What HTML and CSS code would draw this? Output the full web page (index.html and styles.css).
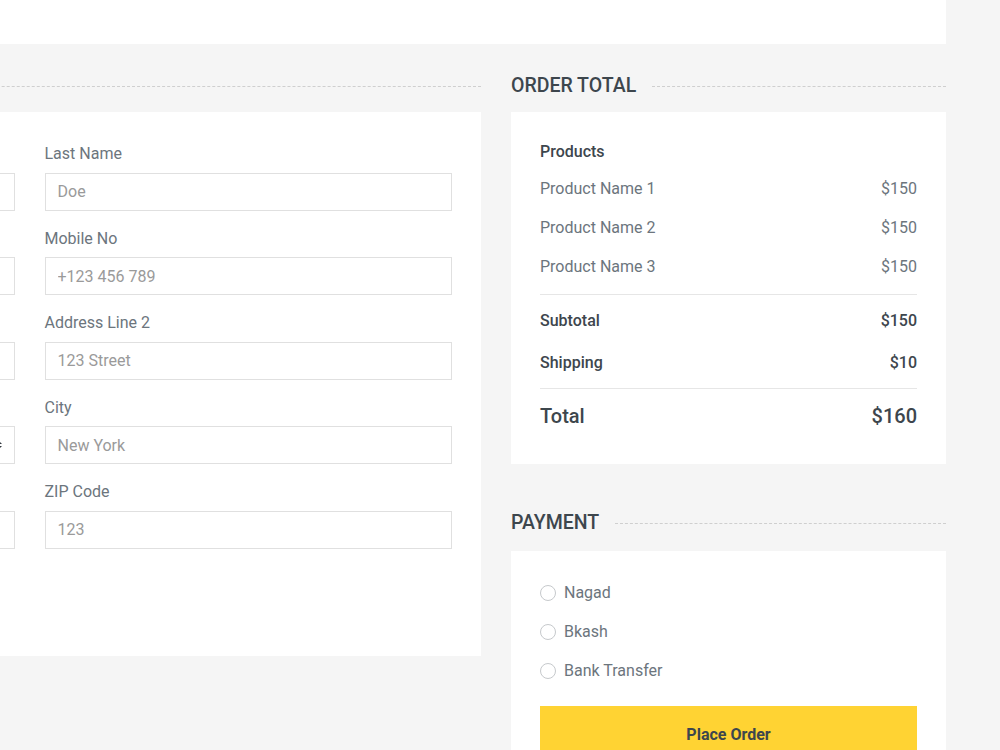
FILE: index.html
```
<!DOCTYPE html>
<html>

<head>
    <title>Checkout</title>
    <link rel="stylesheet" href="styles.css">
</head>

<body>
    <div class="page">
        <nav class="crumbs"></nav>
        <main class="checkout">
            <section class="billing">
                <h5 class="section-title"><span>Billing Address</span></h5>
                <div class="card">
                    <div class="fields">
                        <div class="field">
                            <label>First Name</label>
                            <input type="text" placeholder="John" />
                        </div>
                        <div class="field">
                            <label>Last Name</label>
                            <input type="text" placeholder="Doe" />
                        </div>
                        <div class="field">
                            <label>E-mail</label>
                            <input type="text" placeholder="example@email.com" />
                        </div>
                        <div class="field">
                            <label>Mobile No</label>
                            <input type="text" placeholder="+123 456 789" />
                        </div>
                        <div class="field">
                            <label>Address Line 1</label>
                            <input type="text" placeholder="123 Street" />
                        </div>
                        <div class="field">
                            <label>Address Line 2</label>
                            <input type="text" placeholder="123 Street" />
                        </div>
                        <div class="field">
                            <label>Country</label>
                            <select>
                                <option>Bangladesh</option>
                                <option>United States</option>
                            </select>
                        </div>
                        <div class="field">
                            <label>City</label>
                            <input type="text" placeholder="New York" />
                        </div>
                        <div class="field">
                            <label>State</label>
                            <input type="text" placeholder="New York" />
                        </div>
                        <div class="field">
                            <label>ZIP Code</label>
                            <input type="text" placeholder="123" />
                        </div>
                        <div class="field wide">
                            <label class="check"><input type="checkbox" /> Create an account</label>
                        </div>
                        <div class="field wide last">
                            <label class="check"><input type="checkbox" /> Ship to different address</label>
                        </div>
                    </div>
                </div>
            </section>

            <aside class="summary">
                <h5 class="section-title"><span>Order Total</span></h5>
                <div class="card order">
                    <div class="products">
                        <h6>Products</h6>
                        <div class="line"><p>Product Name 1</p><p>$150</p></div>
                        <div class="line"><p>Product Name 2</p><p>$150</p></div>
                        <div class="line"><p>Product Name 3</p><p>$150</p></div>
                    </div>
                    <div class="totals">
                        <div class="line sub"><h6>Subtotal</h6><h6>$150</h6></div>
                        <div class="line"><h6>Shipping</h6><h6>$10</h6></div>
                    </div>
                    <div class="line grand"><h5>Total</h5><h5>$160</h5></div>
                </div>

                <h5 class="section-title pay-title"><span>Payment</span></h5>
                <div class="card payment">
                    <label class="radio"><input type="radio" name="payment" /> Nagad</label>
                    <label class="radio"><input type="radio" name="payment" /> Bkash</label>
                    <label class="radio"><input type="radio" name="payment" /> Bank Transfer</label>
                    <button class="place-order">Place Order</button>
                </div>
            </aside>
        </main>
    </div>
</body>

</html>
```

FILE: styles.css
```
* {
    margin: 0;
    box-sizing: border-box;
}

body {
    background-color: #f5f5f5;
    font-family: Roboto, "Liberation Sans", sans-serif;
    font-size: 16px;
    color: #6c757d;
    overflow: hidden;
}

.page {
    width: 1368px;
    margin-left: -422px;
}

.crumbs {
    background-color: white;
    height: 44px;
}

.checkout {
    display: grid;
    grid-template-columns: 903px 435px;
    column-gap: 30px;
    align-items: start;
}

.section-title {
    display: flex;
    align-items: center;
    margin-top: 30px;
    margin-bottom: 14px;
    font-size: 19.5px;
    font-weight: 500;
    line-height: 24px;
    color: #3d464d;
    text-transform: uppercase;
}

.section-title span {
    padding-right: 16px;
}

.section-title::after {
    content: "";
    flex: 1;
    border-top: 1px dashed #cfcfcf;
}

.pay-title {
    margin-top: 47px;
    margin-bottom: 16px;
}

.card {
    background-color: white;
    padding: 30px 29px;
}

/* billing form */

.fields {
    display: grid;
    grid-template-columns: 1fr 1fr;
    column-gap: 30px;
}

.field {
    margin-bottom: 16px;
}

.field.wide {
    grid-column: 1 / 3;
}

.field.last {
    margin-bottom: 0;
}

.field label {
    display: block;
    line-height: 23px;
    margin-bottom: 7.5px;
}

.field .check {
    line-height: 22.5px;
    margin-bottom: 0;
}

input[type="text"],
select {
    display: block;
    width: 100%;
    height: 38px;
    padding: 6px 12px;
    border: 1px solid #e0e0e0;
    border-radius: 0;
    background-color: white;
    font-family: inherit;
    font-size: 16px;
    color: #495057;
}

input::placeholder {
    color: #9a9a9a;
}

select {
    appearance: none;
    padding-right: 28px;
    background: white url("data:image/svg+xml,%3csvg xmlns='http://www.w3.org/2000/svg' viewBox='0 0 4 5'%3e%3cpath fill='%23343a40' d='M2 0L0 2h4zm0 5L0 3h4z'/%3e%3c/svg%3e") no-repeat right 12px center / 8px 10px;
}

/* order total */

.line {
    display: flex;
    justify-content: space-between;
}

.order h6 {
    font-size: 16px;
    font-weight: 500;
    line-height: 19px;
    color: #3d464d;
}

.products {
    border-bottom: 1px solid #e6e6e6;
}

.products h6 {
    margin-bottom: 16px;
}

.products p {
    line-height: 23px;
    margin-bottom: 16px;
}

.totals {
    padding: 16px 0;
    border-bottom: 1px solid #e6e6e6;
}

.totals .sub {
    margin-bottom: 22.5px;
}

.grand {
    margin-top: 15.5px;
    margin-bottom: 6px;
}

.grand h5 {
    font-size: 20px;
    font-weight: 500;
    line-height: 24px;
    color: #3d464d;
}

/* payment */

.radio {
    display: flex;
    align-items: center;
    line-height: 23px;
    margin-bottom: 16px;
}

.radio:last-of-type {
    margin-bottom: 0;
}

.radio input {
    appearance: none;
    width: 16px;
    height: 16px;
    margin: 0 8px 0 0;
    border: 1px solid #c6c9cc;
    border-radius: 50%;
    background-color: white;
}

.place-order {
    display: block;
    width: 100%;
    margin-top: 24px;
    padding: 16px;
    border: 1px solid #ffd333;
    background-color: #ffd333;
    font-family: inherit;
    font-size: 16px;
    font-weight: bold;
    line-height: 23px;
    color: #3d464d;
}
```
